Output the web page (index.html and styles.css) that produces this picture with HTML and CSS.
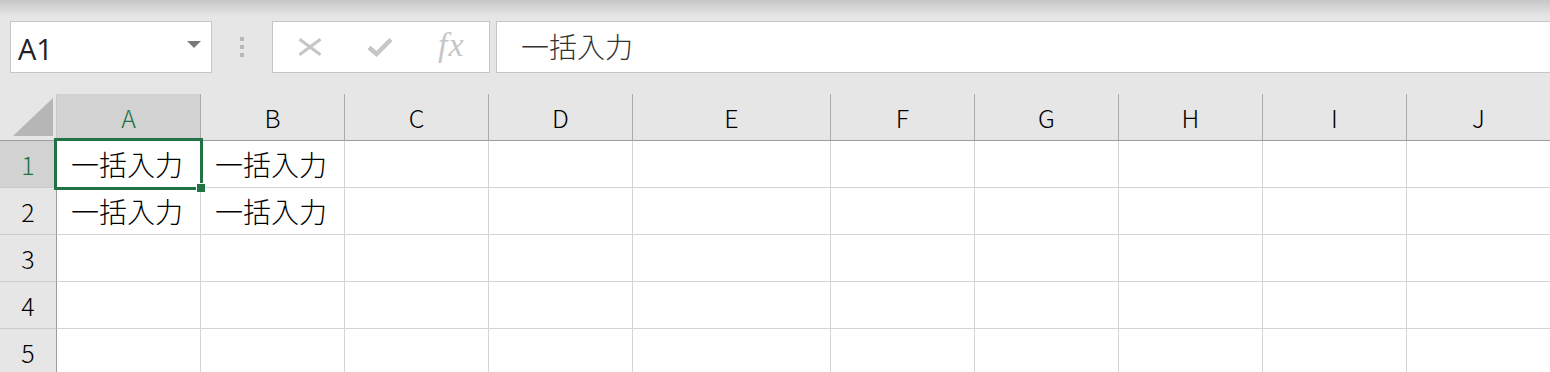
FILE: index.html
```html
<!DOCTYPE html>
<html lang="ja">
<head>
  <meta charset="UTF-8">
  <meta name="viewport" content="width=device-width, initial-scale=1.0">
  <title>Sheet</title>
  <link rel="stylesheet" href="styles.css">
</head>
<body>
  <div class="toolbar">
    <div class="namebox">
      <span class="ref">A1</span>
      <svg class="caret" width="14" height="7" viewBox="0 0 14 7"><path d="M0 0 H14 L7 7 Z" fill="#7a7a7a"/></svg>
    </div>
    <div class="grip"><i></i><i></i><i></i></div>
    <div class="fbuttons">
      <svg width="24" height="18" viewBox="0 0 24 18"><path d="M1.5 1.2 L22.5 16.8 M22.5 1.2 L1.5 16.8" stroke="#c6c6c6" stroke-width="3" fill="none"/></svg>
      <svg width="26" height="20" viewBox="0 0 26 20"><path d="M2 10.5 L9.5 17 L24 2.5" stroke="#c6c6c6" stroke-width="4.5" fill="none"/></svg>
      <span class="fx">fx</span>
    </div>
    <div class="formula">一括入力</div>
  </div>

  <div class="sheet">
    <div class="grid">
      <div class="corner"><svg width="40" height="38" viewBox="0 0 40 38"><path d="M40 0 V38 H0 Z" fill="#b6b6b6"/></svg></div>
      <div class="col-head active">A</div>
      <div class="col-head">B</div>
      <div class="col-head">C</div>
      <div class="col-head">D</div>
      <div class="col-head">E</div>
      <div class="col-head">F</div>
      <div class="col-head">G</div>
      <div class="col-head">H</div>
      <div class="col-head">I</div>
      <div class="col-head">J</div>

      <div class="row-head active">1</div>
      <div class="cell">一括入力</div>
      <div class="cell">一括入力</div>
      <div class="cell"></div><div class="cell"></div><div class="cell"></div><div class="cell"></div>
      <div class="cell"></div><div class="cell"></div><div class="cell"></div><div class="cell"></div>

      <div class="row-head">2</div>
      <div class="cell">一括入力</div>
      <div class="cell">一括入力</div>
      <div class="cell"></div><div class="cell"></div><div class="cell"></div><div class="cell"></div>
      <div class="cell"></div><div class="cell"></div><div class="cell"></div><div class="cell"></div>

      <div class="row-head">3</div>
      <div class="cell"></div><div class="cell"></div><div class="cell"></div><div class="cell"></div><div class="cell"></div>
      <div class="cell"></div><div class="cell"></div><div class="cell"></div><div class="cell"></div><div class="cell"></div>

      <div class="row-head">4</div>
      <div class="cell"></div><div class="cell"></div><div class="cell"></div><div class="cell"></div><div class="cell"></div>
      <div class="cell"></div><div class="cell"></div><div class="cell"></div><div class="cell"></div><div class="cell"></div>

      <div class="row-head">5</div>
      <div class="cell"></div><div class="cell"></div><div class="cell"></div><div class="cell"></div><div class="cell"></div>
      <div class="cell"></div><div class="cell"></div><div class="cell"></div><div class="cell"></div><div class="cell"></div>
    </div>
    <div class="selection"><span class="handle"></span></div>
  </div>
</body>
</html>
```

FILE: styles.css
```css
* {
  box-sizing: border-box;
}

body {
  margin: 0;
  height: 100vh;
  overflow: hidden;
  background-color: #e6e6e6;
  font-family: "Noto Sans CJK JP", "Noto Sans", sans-serif;
  font-weight: 300;
  color: #000;
}

.toolbar {
  display: flex;
  align-items: stretch;
  height: 94px;
  padding: 21px 0 21px 10px;
  background: linear-gradient(#c6c6c6, #e6e6e6 16px);
}

.namebox {
  display: flex;
  align-items: center;
  justify-content: space-between;
  width: 202px;
  padding: 0 10px 0 7px;
  background: #fff;
  border: 1px solid #c6c6c6;
}

.ref {
  font-family: "Open Sans", "Noto Sans", sans-serif;
  font-weight: 400;
  font-size: 29px;
  color: #222;
  margin-top: 3px;
}

.caret {
  margin-top: -5px;
}

.grip {
  display: flex;
  flex-direction: column;
  justify-content: center;
  gap: 4px;
  margin: 0 28px;
}

.grip i {
  display: block;
  width: 4px;
  height: 4px;
  background: #b8b8b8;
}

.fbuttons {
  display: flex;
  align-items: center;
  gap: 45px;
  width: 218px;
  padding-left: 25px;
  background: #fff;
  border: 1px solid #c6c6c6;
}

.fx {
  font-family: "Liberation Serif", serif;
  font-style: italic;
  font-weight: 400;
  font-size: 34px;
  color: #c6c6c6;
  margin-top: -5px;
  letter-spacing: 1px;
}

.formula {
  flex: 1;
  margin-left: 6px;
  margin-right: -2px;
  display: flex;
  align-items: center;
  padding: 0 0 3px 24px;
  background: #fff;
  border: 1px solid #c6c6c6;
  font-size: 28px;
  color: #333;
}

.sheet {
  position: relative;
}

.grid {
  display: grid;
  grid-template-columns: 57px repeat(4, 144px) 198px repeat(5, 144px);
  grid-auto-rows: 47px;
}

.corner {
  display: flex;
  align-items: flex-end;
  justify-content: flex-end;
  padding: 0 3px 4px 0;
  border-right: 1px solid #c8c8c8;
  border-bottom: 1px solid #9e9e9e;
}

.col-head {
  display: flex;
  align-items: center;
  justify-content: center;
  font-size: 25px;
  border-right: 1px solid #ababab;
  border-bottom: 1px solid #9e9e9e;
}

.row-head {
  display: flex;
  align-items: center;
  justify-content: center;
  font-size: 25px;
  border-right: 1px solid #9e9e9e;
  border-bottom: 1px solid #cbcbcb;
}

.col-head.active,
.row-head.active {
  background: #d2d2d2;
  color: #217346;
}

.cell {
  display: flex;
  align-items: center;
  padding-left: 14px;
  font-size: 28px;
  white-space: nowrap;
  background: #fff;
  border-right: 1px solid #d4d4d4;
  border-bottom: 1px solid #d4d4d4;
}

.selection {
  position: absolute;
  left: 54px;
  top: 44px;
  width: 149px;
  height: 52px;
  border: 3px solid #217346;
}

.handle {
  position: absolute;
  right: -5px;
  bottom: -5px;
  width: 9px;
  height: 9px;
  background: #217346;
  border-left: 1px solid #fff;
  border-top: 1px solid #fff;
}
```
